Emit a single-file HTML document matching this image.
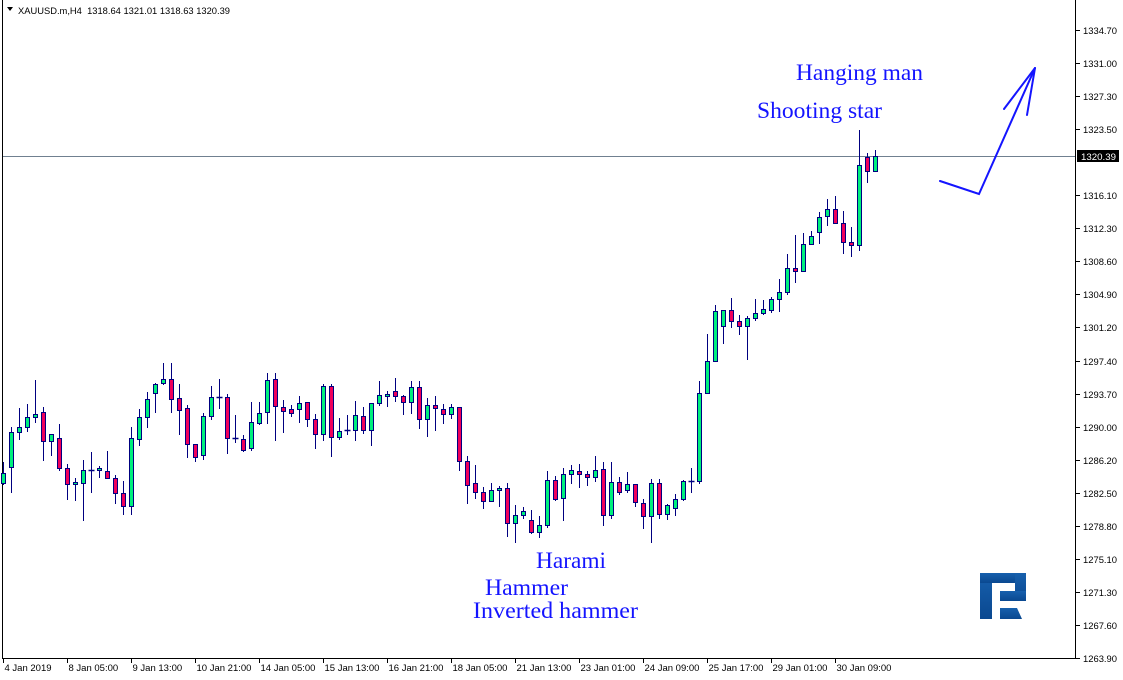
<!DOCTYPE html>
<html><head><meta charset="utf-8"><style>
html,body{margin:0;padding:0;background:#fff;width:1123px;height:680px;overflow:hidden}
svg{display:block}
.ax{font-family:"Liberation Sans",sans-serif;font-size:9.5px;fill:#000}
.an{font-family:"Liberation Serif",serif;font-size:23px;fill:#1414ff}
</style></head><body>
<svg id="s" width="1123" height="680" viewBox="0 0 1123 680" xmlns="http://www.w3.org/2000/svg">
<rect x="0" y="0" width="1123" height="680" fill="#fff"/>
<line x1="2.5" y1="0" x2="2.5" y2="659" stroke="#000"/>
<line x1="2" y1="658.5" x2="1076" y2="658.5" stroke="#000"/>
<line x1="1075.5" y1="0" x2="1075.5" y2="659" stroke="#000"/>
<line x1="3" y1="156.5" x2="1075" y2="156.5" stroke="#708090"/>
<g id="c"></g>
<g id="ax"></g>
<rect x="1077" y="150" width="42" height="12" fill="#000"/>
<text x="1081" y="160" class="ax" style="fill:#fff" textLength="35" lengthAdjust="spacingAndGlyphs">1320.39</text>
<path d="M7 7 L13 7 L10 11 Z" fill="#000"/>
<text x="18" y="14" class="ax" style="font-size:9.5px" textLength="212" lengthAdjust="spacingAndGlyphs">XAUUSD.m,H4&#160;&#160;1318.64 1321.01 1318.63 1320.39</text>
<text x="796" y="80" class="an" textLength="127" lengthAdjust="spacingAndGlyphs">Hanging man</text>
<text x="757" y="118" class="an" textLength="125" lengthAdjust="spacingAndGlyphs">Shooting star</text>
<text x="536" y="568" class="an" textLength="70" lengthAdjust="spacingAndGlyphs">Harami</text>
<text x="485" y="595" class="an" textLength="83" lengthAdjust="spacingAndGlyphs">Hammer</text>
<text x="473" y="618" class="an" textLength="165" lengthAdjust="spacingAndGlyphs">Inverted hammer</text>
<g stroke="#1414ff" stroke-width="2" fill="none" stroke-linecap="round">
<polyline points="940,181 979,194 1035,68"/>
<line x1="1035" y1="68" x2="1004" y2="109"/>
<line x1="1035" y1="68" x2="1027" y2="115"/>
</g>
<defs><linearGradient id="lg" x1="0" y1="0" x2="0" y2="1"><stop offset="0" stop-color="#1760ad"/><stop offset="1" stop-color="#0a4890"/></linearGradient></defs>
<g fill="url(#lg)">
<rect x="980" y="573" width="12" height="46"/>
<rect x="980" y="573" width="46" height="10"/>
<rect x="1015" y="573" width="11" height="28"/>
<rect x="1000" y="591" width="26" height="10"/>
<polygon points="1000,608 1017,608 1022,619 1000,619"/>
</g>
</svg>
<script>
var D=[
[462,473,483,484,'g'],[427,432,467,492,'g'],[408,427,432,439,'g'],[404,417,427,431,'g'],[380,414,417,422,'g'],
[407,412,441,460,'r'],[434,434,441,455,'g'],[424,438,468,470,'r'],[464,468,484,499,'r'],[478,482,484,500,'g'],
[460,470,483,520,'g'],[452,470,470,492,'d'],[466,468,470,477,'g'],[451,471,478,478,'r'],[475,478,493,503,'r'],
[481,493,506,514,'r'],[427,438,506,514,'g'],[409,417,439,445,'g'],[392,399,417,427,'g'],[383,384,393,412,'g'],
[363,379,383,384,'g'],[363,379,399,412,'r'],[384,398,410,434,'r'],[405,408,444,457,'r'],[444,444,457,461,'r'],
[413,416,455,459,'g'],[386,397,416,419,'g'],[379,397,397,408,'d'],[394,397,438,453,'r'],[415,438,438,442,'d'],
[435,439,450,451,'r'],[402,422,448,450,'g'],[402,413,423,424,'g'],[373,380,412,423,'g'],[373,379,406,440,'r'],
[400,407,411,432,'r'],[405,409,413,416,'r'],[396,403,409,422,'g'],[402,402,419,426,'r'],[414,419,434,448,'r'],
[384,386,434,440,'g'],[384,386,437,456,'r'],[418,431,437,439,'g'],[415,430,430,434,'d'],[401,415,430,440,'g'],
[407,416,430,433,'r'],[403,403,430,445,'g'],[381,395,403,405,'g'],[391,394,396,406,'g'],[378,391,396,401,'r'],
[395,396,402,414,'r'],[381,387,402,413,'g'],[381,387,419,428,'r'],[398,405,419,436,'g'],[396,405,408,430,'r'],
[404,409,414,423,'r'],[404,407,414,418,'g'],[407,407,461,470,'r'],[456,461,485,503,'r'],[465,483,492,498,'r'],
[487,492,501,508,'r'],[483,490,501,501,'g'],[486,488,490,506,'g'],[483,488,523,536,'r'],[505,515,523,542,'g'],
[507,511,515,518,'g'],[510,520,532,533,'r'],[516,525,532,537,'g'],[471,480,525,527,'g'],[476,480,499,500,'r'],
[468,474,498,520,'g'],[465,470,474,483,'g'],[464,471,474,487,'r'],[471,474,477,485,'r'],[456,470,477,481,'g'],
[462,469,515,525,'r'],[462,482,515,518,'g'],[477,482,492,494,'r'],[472,484,490,492,'g'],[484,484,502,506,'r'],
[499,503,516,528,'r'],[479,483,516,542,'g'],[479,483,514,518,'r'],[504,505,514,519,'g'],[494,499,508,515,'g'],
[480,481,499,500,'g'],[468,481,481,492,'d'],[381,393,481,483,'g'],[334,361,393,393,'g'],[305,311,361,361,'g'],
[310,310,326,343,'g'],[298,310,321,327,'r'],[315,321,326,334,'r'],[316,318,326,359,'g'],[299,313,318,320,'g'],
[300,309,313,314,'g'],[297,299,310,312,'g'],[279,292,299,311,'g'],[254,268,292,294,'g'],[235,268,271,282,'r'],
[233,244,271,271,'g'],[231,236,244,244,'g'],[212,217,232,243,'g'],[199,209,216,225,'g'],[196,209,223,223,'r'],
[211,223,242,253,'r'],[227,242,245,256,'r'],[130,165,245,250,'g'],[153,157,171,182,'r'],[150,156,171,171,'g']];
var h='';
D.forEach(function(d,k){var c=3.5+8*k;
h+='<line x1="'+c+'" y1="'+d[0]+'" x2="'+c+'" y2="'+(d[3]+1)+'" stroke="#000080"/>';
if(d[4]=='d'||d[2]-d[1]<1){h+='<line x1="'+(c-3)+'" y1="'+(d[1]+0.5)+'" x2="'+(c+3)+'" y2="'+(d[1]+0.5)+'" stroke="#000080" stroke-width="1.5"/>';}
else h+='<rect x="'+(c-2)+'" y="'+(d[1]+0.5)+'" width="4" height="'+(d[2]-d[1])+'" fill="'+(d[4]=='g'?'#00f07c':'#f0005a')+'" stroke="#000080"/>';});
document.getElementById('c').innerHTML=h;
var L=['1334.70','1331.00','1327.30','1323.50','1319.80','1316.10','1312.30','1308.60','1304.90','1301.20','1297.40','1293.70','1290.00','1286.20','1282.50','1278.80','1275.10','1271.30','1267.60','1263.90'];
var a='';
L.forEach(function(t,i){var y=Math.round(30+33.05*i)+0.5;
if(i==4)return;
a+='<line x1="1076" y1="'+y+'" x2="1080" y2="'+y+'" stroke="#000"/><text x="1083" y="'+(y+3.5)+'" class="ax" textLength="34" lengthAdjust="spacingAndGlyphs">'+t+'</text>';});
var T=['4 Jan 2019','8 Jan 05:00','9 Jan 13:00','10 Jan 21:00','14 Jan 05:00','15 Jan 13:00','16 Jan 21:00','18 Jan 05:00','21 Jan 13:00','23 Jan 01:00','24 Jan 09:00','25 Jan 17:00','29 Jan 01:00','30 Jan 09:00'];
T.forEach(function(t,i){var x=3.5+64*i;
a+='<line x1="'+x+'" y1="659" x2="'+x+'" y2="663" stroke="#000"/><text x="'+(x+1)+'" y="671" class="ax">'+t+'</text>';});
document.getElementById('ax').innerHTML=a;
</script>
</body></html>
